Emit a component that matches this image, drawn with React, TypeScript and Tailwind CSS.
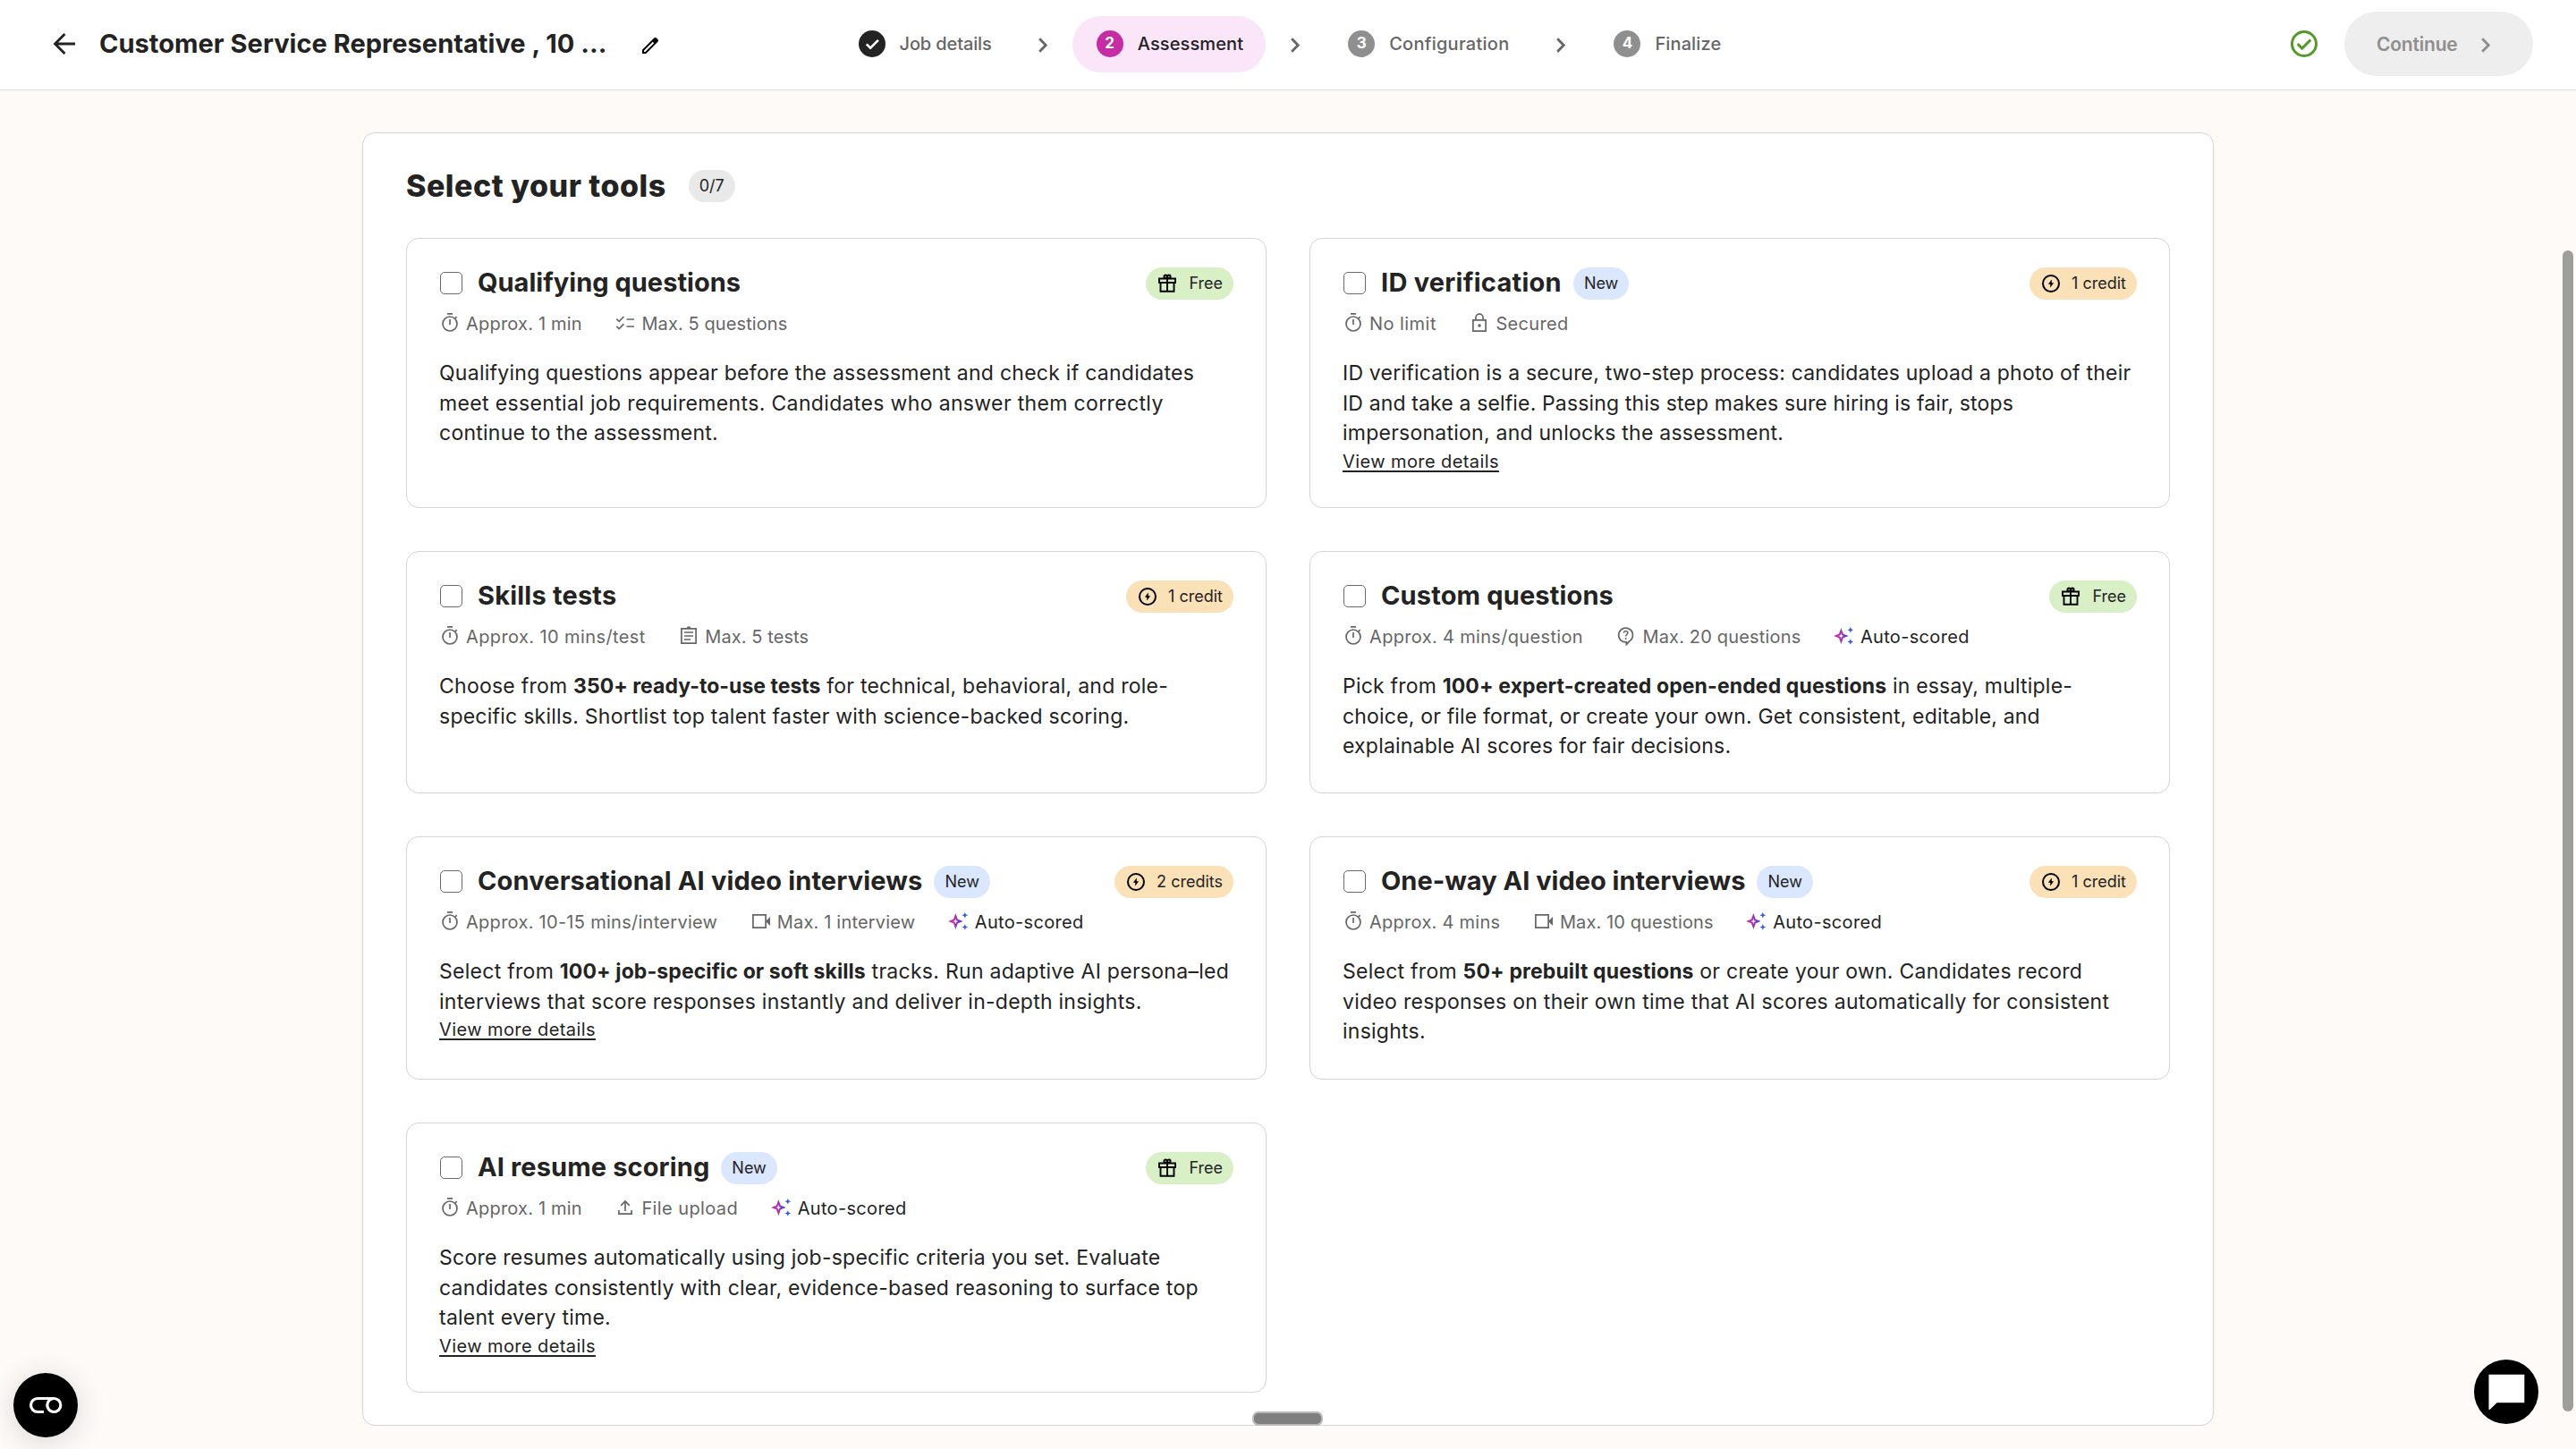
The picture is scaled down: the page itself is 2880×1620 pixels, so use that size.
import type { ReactNode } from "react";
import clsx from "clsx";

type IconName = "timer" | "checklist" | "lock" | "assignment" | "question" | "video" | "upload" | "sparkle";

interface Meta {
  icon: IconName;
  label: string;
  tracking?: string;
}

interface Line {
  text: ReactNode;
  tracking?: string;
}

interface Tool {
  title: string;
  titleTracking?: string;
  isNew?: boolean;
  price: "Free" | "1 credit" | "2 credits";
  meta: Meta[];
  lines: Line[];
  hasDetails?: boolean;
}

const autoScored: Meta = { icon: "sparkle", label: "Auto-scored", tracking: "tracking-[0.33px]" };

const tools: Tool[] = [
  {
    title: "Qualifying questions",
    titleTracking: "tracking-[0.02px]",
    price: "Free",
    meta: [
      { icon: "timer", label: "Approx. 1 min", tracking: "tracking-[0.2px]" },
      { icon: "checklist", label: "Max. 5 questions", tracking: "tracking-[0.1px]" },
    ],
    lines: [
      { text: "Qualifying questions appear before the assessment and check if candidates", tracking: "tracking-[0.26px]" },
      { text: "meet essential job requirements. Candidates who answer them correctly", tracking: "tracking-[0.35px]" },
      { text: "continue to the assessment." },
    ],
  },
  {
    title: "ID verification",
    titleTracking: "tracking-[0.25px]",
    isNew: true,
    price: "1 credit",
    meta: [
      { icon: "timer", label: "No limit", tracking: "tracking-[0.45px]" },
      { icon: "lock", label: "Secured", tracking: "tracking-[0.35px]" },
    ],
    lines: [
      { text: "ID verification is a secure, two-step process: candidates upload a photo of their", tracking: "tracking-[0.21px]" },
      { text: "ID and take a selfie. Passing this step makes sure hiring is fair, stops", tracking: "tracking-[0.14px]" },
      { text: "impersonation, and unlocks the assessment." },
    ],
    hasDetails: true,
  },
  {
    title: "Skills tests",
    titleTracking: "tracking-[0.2px]",
    price: "1 credit",
    meta: [
      { icon: "timer", label: "Approx. 10 mins/test", tracking: "tracking-[0.4px]" },
      { icon: "assignment", label: "Max. 5 tests", tracking: "tracking-[0.08px]" },
    ],
    lines: [
      { text: <>Choose from <b className="tracking-[0.02px]">350+ ready-to-use tests</b> for technical, behavioral, and role-</> },
      { text: "specific skills. Shortlist top talent faster with science-backed scoring." },
    ],
  },
  {
    title: "Custom questions",
    titleTracking: "tracking-[0.15px]",
    price: "Free",
    meta: [
      { icon: "timer", label: "Approx. 4 mins/question", tracking: "tracking-[0.33px]" },
      { icon: "question", label: "Max. 20 questions", tracking: "tracking-[0.17px]" },
      autoScored,
    ],
    lines: [
      { text: <>Pick from <b className="tracking-[0.12px]">100+ expert-created open-ended questions</b> in essay, multiple-</>, tracking: "tracking-[0.2px]" },
      { text: "choice, or file format, or create your own. Get consistent, editable, and", tracking: "tracking-[0.18px]" },
      { text: "explainable AI scores for fair decisions.", tracking: "tracking-[0.2px]" },
    ],
  },
  {
    title: "Conversational AI video interviews",
    titleTracking: "tracking-[0.14px]",
    isNew: true,
    price: "2 credits",
    meta: [
      { icon: "timer", label: "Approx. 10-15 mins/interview", tracking: "tracking-[0.28px]" },
      { icon: "video", label: "Max. 1 interview", tracking: "tracking-[0.18px]" },
      autoScored,
    ],
    lines: [
      { text: <>Select from <b className="tracking-[0.1px]">100+ job-specific or soft skills</b> tracks. Run adaptive AI persona–led</>, tracking: "tracking-[0.28px]" },
      { text: "interviews that score responses instantly and deliver in-depth insights.", tracking: "tracking-[0.26px]" },
    ],
    hasDetails: true,
  },
  {
    title: "One-way AI video interviews",
    titleTracking: "tracking-normal",
    isNew: true,
    price: "1 credit",
    meta: [
      { icon: "timer", label: "Approx. 4 mins", tracking: "tracking-[0.27px]" },
      { icon: "video", label: "Max. 10 questions", tracking: "tracking-[0.1px]" },
      autoScored,
    ],
    lines: [
      { text: <>Select from <b className="tracking-[0.13px]">50+ prebuilt questions</b> or create your own. Candidates record</>, tracking: "tracking-[0.26px]" },
      { text: "video responses on their own time that AI scores automatically for consistent", tracking: "tracking-[0.28px]" },
      { text: "insights." },
    ],
  },
  {
    title: "AI resume scoring",
    titleTracking: "tracking-[0.12px]",
    isNew: true,
    price: "Free",
    meta: [
      { icon: "timer", label: "Approx. 1 min", tracking: "tracking-[0.2px]" },
      { icon: "upload", label: "File upload", tracking: "tracking-[0.4px]" },
      autoScored,
    ],
    lines: [
      { text: "Score resumes automatically using job-specific criteria you set. Evaluate" },
      { text: "candidates consistently with clear, evidence-based reasoning to surface top", tracking: "tracking-[0.26px]" },
      { text: "talent every time." },
    ],
    hasDetails: true,
  },
];

const steps = [
  { label: "Job details", state: "done", tracking: "tracking-[-0.12px]" },
  { label: "Assessment", state: "active", tracking: "tracking-[0.12px]" },
  { label: "Configuration", state: "todo", tracking: "tracking-[0.26px]" },
  { label: "Finalize", state: "todo", tracking: "tracking-[0.12px]" },
];

export default function App() {
  return (
    <div className="h-[1620px] w-[2880px] overflow-hidden bg-[#fefaf7] font-['Inter',sans-serif] text-[#232323]">
      <Header />
      <main className="mx-auto mt-[47px] w-[2070px] rounded-[14px] border border-[#d4d4d4] bg-white px-12 pt-[41px] pb-9">
        <div className="flex h-9 items-center gap-[25px]">
          <h1 className="text-[34px] leading-9 font-extrabold tracking-[0.5px]">Select your tools</h1>
          <span className="flex h-9 items-center rounded-full bg-[#e9e9e9] px-3 pb-[2px] text-[18px]">0/7</span>
        </div>
        <div className="mt-10 grid grid-cols-2 grid-rows-[302px_271px_272px_302px] gap-12">
          {tools.map((tool) => (
            <ToolCard key={tool.title} tool={tool} />
          ))}
        </div>
      </main>

      <div className="fixed top-[280px] left-[2865px] h-[1298px] w-3 rounded-full bg-[#9e9e9b]" />
      <div className="fixed top-[1578px] left-[1400px] h-4 w-[79px] rounded-[7px] border-2 border-[#b9b9b9] bg-[#7f7f7f]" />
      <CookieButton />
      <ChatButton />
    </div>
  );
}

function Header() {
  return (
    <header className="flex h-[101px] items-center border-b border-[#dcdcdc] bg-white pr-12 pb-[2px]">
      <div className="flex w-[933px] items-center pl-[54px]">
        <svg viewBox="0 0 24 24" className="size-9" fill="none" stroke="currentColor" strokeWidth="1.9">
          <path d="M20 12H5.2M12.3 4.6 5 12l7.3 7.4" />
        </svg>
        <h2 className="ml-[21px] w-[604px] text-[29px] leading-9 font-bold tracking-[0.03px] whitespace-nowrap">
          Customer Service Representative , 10 ...
        </h2>
        <svg viewBox="0 0 24 24" className="mt-1 size-6" fill="#000" fillRule="evenodd">
          <path d="M3 21v-4.25L16.2 3.55c.9-.8 1.9-.8 2.8 0l1.45 1.45c.8.9.8 1.9 0 2.8L7.25 21zM5 19h1.4l9.8-9.8-1.4-1.4L5 17.6z" />
        </svg>
      </div>
      <nav className="flex items-center">
        {steps.map((step, i) => (
          <div key={step.label} className="flex items-center">
            {i > 0 && <Chevron className="mx-7 mt-0.5 text-[#666]" />}
            <div
              className={clsx(
                "flex h-[63px] items-center gap-4 rounded-full pr-[24.5px] pl-[26.5px]",
                step.state === "active" && "bg-[#fae5f9]"
              )}
            >
              <span
                className={clsx(
                  "flex size-[30px] items-center justify-center rounded-full text-[17px] font-bold text-white",
                  step.state === "done" && "bg-[#232323]",
                  step.state === "active" && "bg-[#c52da4]",
                  step.state === "todo" && "bg-[#8f8f8f]"
                )}
              >
                {step.state === "done" ? (
                  <svg viewBox="0 0 30 30" className="size-[30px]" fill="none" stroke="#fff" strokeWidth="2.6">
                    <path d="m8.8 15.3 4.3 4.3 8.8-8.8" />
                  </svg>
                ) : (
                  i + 1
                )}
              </span>
              <span
                className={clsx("text-[20px] leading-6 font-medium", step.tracking, step.state !== "active" && "text-[#666]")}
              >
                {step.label}
              </span>
            </div>
          </div>
        ))}
      </nav>
      <div className="ml-auto flex items-center gap-[27px]">
        <svg viewBox="0 0 24 24" className="size-9" fill="none" stroke="#55992b" strokeWidth="2">
          <circle cx="12" cy="12" r="9" />
          <path d="m7.2 12.1 3.3 3.3L16.9 9" />
        </svg>
        <button className="flex h-[72px] w-[211px] items-center justify-between rounded-full bg-[#eee] pr-12 pl-[36px] text-[21px] font-semibold tracking-[-0.2px] text-[#8e8e8e]">
          <span className="pt-0.5">Continue</span>
          <Chevron className="mt-0.5" />
        </button>
      </div>
    </header>
  );
}

function ToolCard({ tool }: { tool: Tool }) {
  return (
    <section className="rounded-[14px] border border-[#d4d4d4] bg-white px-9 pt-8">
      <div className="flex h-9 items-center">
        <span className="mb-[2px] ml-px size-[25px] rounded-[5px] border-[1.5px] border-[#6a6a6a] bg-white" />
        <h3 className={clsx("ml-[17px] pb-[2px] text-[29px] leading-9 font-bold whitespace-nowrap", tool.titleTracking)}>
          {tool.title}
        </h3>
        {tool.isNew && (
          <span className="ml-[13px] flex h-9 items-center rounded-full bg-[#dbe7fe] px-3 pb-[2px] text-[18px]">New</span>
        )}
        <PriceBadge price={tool.price} />
      </div>
      <div className="mt-3.5 flex h-6 items-center gap-[36.5px]">
        {tool.meta.map((m) => (
          <div
            key={m.label}
            className={clsx("flex items-center gap-1.5", m.icon === "sparkle" ? "text-[#232323]" : "text-[#666]")}
          >
            <MetaIcon name={m.icon} />
            <span className={clsx("pt-px text-[20px] leading-6 whitespace-nowrap", m.tracking)}>{m.label}</span>
          </div>
        ))}
      </div>
      <p className="mt-7 text-[23px] leading-[33.6px] whitespace-nowrap">
        {tool.lines.map((line, i) => (
          <span key={i} className={clsx("block", line.tracking ?? "tracking-[0.24px]")}>
            {line.text}
          </span>
        ))}
      </p>
      {tool.hasDetails && (
        <a className="-mt-px block w-fit text-[20px] leading-[30px] tracking-[0.41px] underline decoration-2 underline-offset-3">
          View more details
        </a>
      )}
    </section>
  );
}

function PriceBadge({ price }: { price: Tool["price"] }) {
  const free = price === "Free";
  return (
    <span
      className={clsx(
        "ml-auto flex h-9 items-center rounded-full px-3 text-[18px] whitespace-nowrap",
        free ? "gap-3 bg-[#d9f0c6]" : "gap-[11px] bg-[#fae1b8]"
      )}
    >
      {free ? (
        <svg viewBox="0 0 24 24" className="size-6" fill="none" stroke="#000" strokeWidth="1.9">
          <path d="M4.5 11v9.8h15V11M3 6.5h18V11H3zM12 6.5V21" />
          <circle cx="10.1" cy="4.2" r="1.7" />
          <circle cx="13.9" cy="4.2" r="1.7" />
        </svg>
      ) : (
        <svg viewBox="0 0 24 24" className="size-6" fill="none" stroke="#000" strokeWidth="2">
          <circle cx="12" cy="12" r="9" />
          <path d="M11.2 16.6v-3.8H8.9l3.9-5.4v3.8h2.3z" fill="#000" stroke="none" />
        </svg>
      )}
      <span className="pb-[2px]">{price}</span>
    </span>
  );
}

function MetaIcon({ name }: { name: IconName }) {
  if (name === "sparkle") {
    return (
      <svg viewBox="0 0 24 24" className="size-6">
        <defs>
          <linearGradient id="sparkle" x1="0" x2="1">
            <stop offset="0.3" stopColor="#c52da4" />
            <stop offset="1" stopColor="#5a3fd6" />
          </linearGradient>
        </defs>
        <path
          d="M8.4 6 10 10.4 14 12 10 13.600 8.400 18 6.800 13.600 2.800 12 6.800 10.400z"
          fill="none"
          stroke="url(#sparkle)"
          strokeWidth="2"
        />
        <path
          d="m18.8 2 1 2.300 2.300 1-2.300 1-1 2.300-1-2.300-2.300-1 2.300-1zM18.800 15.200l1 2.300 2.300 1-2.300 1-1 2.300-1-2.300-2.300-1 2.300-1z"
          fill="#3558e8"
        />
      </svg>
    );
  }
  return (
    <svg viewBox="0 0 24 24" className="size-6" fill="none" stroke="currentColor" strokeWidth="1.7">
      {name === "timer" && (
        <>
          <circle cx="12" cy="13" r="8" />
          <path d="M9 1.9h6M12 8v6M18 6.8l1.6-1.6" />
        </>
      )}
      {name === "checklist" && <path d="M13.5 8H22M13.5 16H22M2.3 7.6l2.9 2.8 5.2-5.4M2.3 15.8l2.9 2.8 5.2-5.4" />}
      {name === "lock" && (
        <>
          <path d="M4.9 8.9h14.2v12.2H4.9zM7.9 8.9V6.2a4.1 4.1 0 0 1 8.2 0v2.7" />
          <circle cx="12" cy="15" r="1.8" fill="currentColor" stroke="none" />
        </>
      )}
      {name === "assignment" && (
        <>
          <path d="M3.9 3.9h16.2v16.2H3.9zM7 8h10M7 12h10M7 16h7" />
          <path d="M9.6 3.6a2.4 2.4 0 0 1 4.8 0z" fill="currentColor" stroke="none" />
        </>
      )}
      {name === "question" && (
        <>
          <path d="M12.4 21.5v-2.6h-.9a7.9 7.9 0 1 1 3.9-1c-.6 1.4-1.6 2.6-3 3.6z" />
          <path d="M9.3 8.6c.2-1.3 1.1-2 2.3-2s2.3.8 2.3 2c0 1.6-2.3 1.8-2.3 3.9" strokeWidth="1.5" />
          <circle cx="11.6" cy="14.9" r="1" fill="currentColor" stroke="none" />
        </>
      )}
      {name === "video" && (
        <>
          <path d="M2.9 4.9h14.200v14.200H2.900z" />
          <path d="m18 11 4-4v10l-4-4z" fill="currentColor" stroke="none" />
        </>
      )}
      {name === "upload" && <path d="M12 16V5.200M7.200 9.800 12 5l4.800 4.800M4.900 15v4.100h14.200V15" />}
    </svg>
  );
}

function Chevron({ className }: { className?: string }) {
  return (
    <svg viewBox="0 0 10 17" className={clsx("h-[17px] w-2.5", className)} fill="none" stroke="currentColor" strokeWidth="2.8">
      <path d="m1.2 1.2 7 7.3-7 7.3" />
    </svg>
  );
}

function CookieButton() {
  return (
    <button className="fixed top-[1535px] left-[15px] size-[72px] rounded-full bg-black shadow-[0_4px_32px_rgba(0,0,0,0.15)]">
      <svg viewBox="0 0 72 72" className="size-[72px]" fill="none" stroke="#fff" strokeWidth="3.2">
        <path d="M34 43.5h-7a7.500 7.500 0 0 1 0-15h18.500" />
        <circle cx="45.3" cy="36" r="7.5" />
      </svg>
    </button>
  );
}

function ChatButton() {
  return (
    <button className="fixed top-[1520px] left-[2766px] size-[72px] rounded-full bg-black">
      <svg viewBox="0 0 72 72" className="size-[72px]" fill="#fff">
        <path d="M16.5 16.800h39.800v31.400H25.600l-8 7.800h-1.100z" />
      </svg>
    </button>
  );
}
